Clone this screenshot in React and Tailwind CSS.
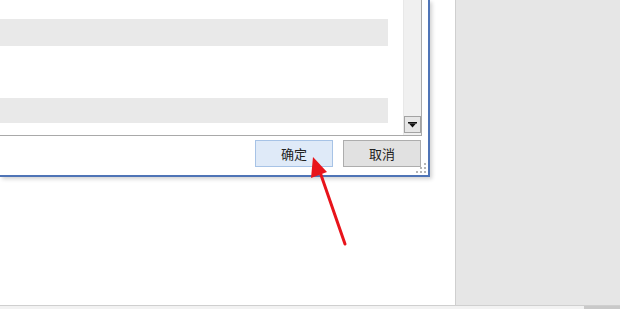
import React from "react";

export default function App() {
  return (
    <div className="relative w-[620px] h-[309px] bg-white overflow-hidden flex flex-col" style={{ fontFamily: '"Noto Sans CJK SC", "Noto Sans", sans-serif' }}>
      <div className="flex h-[305px]">
        <div className="w-[455px] bg-white">
          <div className="w-[430px] h-[177px] bg-white border-r-2 border-b-2 border-[#4f74b6] shadow-[2px_2px_4px_rgba(0,0,0,0.18)] flex flex-col">
            <div className="w-[422px] h-[136px] border-r border-b border-[#a9a9a9] flex">
              <div className="w-[403px] flex flex-col pr-[15px]">
                <div className="h-[19px]" />
                <div className="h-[27px] bg-[#e9e9e9]" />
                <div className="h-[52px]" />
                <div className="h-[25px] bg-[#e9e9e9]" />
              </div>
              <div className="w-[18px] bg-[#f0f0f0] border-l border-[#e8e8e8] flex flex-col justify-end pb-[2px]">
                <div className="h-[17px] w-[17px] bg-[#e6e6e6] border border-[#a3a3a3] flex items-center justify-center">
                  <svg width="9" height="6" viewBox="0 0 9 6">
                    <rect x="0" y="0" width="9" height="1.5" fill="#111" />
                    <polygon points="1,1.5 8,1.5 4.5,5.5" fill="#111" />
                  </svg>
                </div>
              </div>
            </div>
            <div className="flex-1 relative flex items-start justify-end pt-[4px] pr-[7px] gap-[10px]">
              <div className="w-[78px] h-[27px] bg-[#dfeaf8] border border-[#a7c3e6] flex items-center justify-center text-[13px] text-[#222]">确定</div>
              <div className="w-[78px] h-[27px] bg-[#e1e1e1] border border-[#adadad] flex items-center justify-center text-[13px] text-[#222]">取消</div>
              <svg className="absolute right-[1px] bottom-[1px]" width="11" height="11" viewBox="0 0 11 11">
                <rect x="8" y="0" width="2" height="2" fill="#b5b5b5" />
                <rect x="4" y="4" width="2" height="2" fill="#b5b5b5" />
                <rect x="8" y="4" width="2" height="2" fill="#b5b5b5" />
                <rect x="0" y="8" width="2" height="2" fill="#b5b5b5" />
                <rect x="4" y="8" width="2" height="2" fill="#b5b5b5" />
                <rect x="8" y="8" width="2" height="2" fill="#b5b5b5" />
              </svg>
            </div>
          </div>
        </div>
        <div className="flex-1 bg-[#e6e6e6] border-l border-[#cfcfcf]" />
      </div>
      <div className="h-[4px] border-t border-[#cfcfcf] bg-[#f2f2f2] flex justify-end">
        <div className="w-[36px] bg-[#c9c9c9]" />
      </div>
      <svg className="absolute left-0 top-0 pointer-events-none" width="620" height="309" viewBox="0 0 620 309">
        <line x1="345" y1="244" x2="320" y2="172" stroke="#e8141b" strokeWidth="3" strokeLinecap="round" />
        <polygon points="313,157 311,178 327,172" fill="#e8141b" />
      </svg>
    </div>
  );
}
